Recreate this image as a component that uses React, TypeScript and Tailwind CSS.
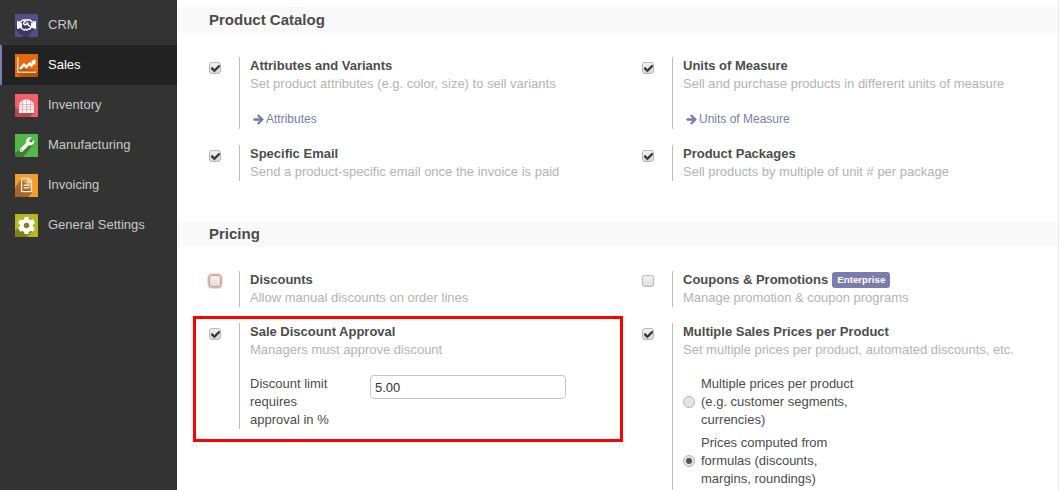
import type { ReactNode } from "react";
import { FaArrowRight, FaCheck, FaCog, FaRegFileAlt, FaRegHandshake, FaWrench } from "react-icons/fa";

function CrmIcon() {
  return (
    <svg width="23" height="23" viewBox="0 0 23 23" className="block">
      <rect width="23" height="23" fill="#544f84" />
      <polygon points="2,11 8,8 21,13 13,23 8,23 0,15" fill="#3d3961" />
      <FaRegHandshake x={2} y={1.5} size={19} color="#fff" />
      <path d="M3 9h4v5H3zM16 9h4v5h-4z" fill="#fff" />
    </svg>
  );
}

function SalesIcon() {
  return (
    <svg width="23" height="23" viewBox="0 0 23 23" className="block">
      <rect width="23" height="23" fill="#e3690c" />
      <polygon points="2,4 2,19 6,23 23,23 23,19 19,16 2,14" fill="#b4570f" />
      <path d="M2.8 3v15.2H21" fill="none" stroke="#f3c9a4" strokeWidth="1.6" />
      <path d="M5 15l4-4.5 2.5 2.5 3-3.5 2 2 2-3" fill="none" stroke="#fff" strokeWidth="2.4" />
      <polygon points="15.5,7.5 20.5,5 20.5,11" fill="#fff" />
    </svg>
  );
}

function InventoryIcon() {
  return (
    <svg width="23" height="23" viewBox="0 0 23 23" className="block">
      <rect width="23" height="23" fill="#f4606a" />
      <polygon points="0,12 4,17 19,17 19,19 15,23 0,23" fill="#b5484f" />
      <path d="M4 19V10C5.5 7.5 8.5 5.5 11.5 5 14.5 5.5 17.5 7.5 19 10v9z" fill="#fff" />
      <path d="M4 10.5h15M4 13h15M4 15.5h15M7.5 7v12M11.5 5v14M15.5 7v12" stroke="#f4a0a5" strokeWidth="0.8" />
    </svg>
  );
}

function ManufacturingIcon() {
  return (
    <svg width="23" height="23" viewBox="0 0 23 23" className="block">
      <rect width="23" height="23" fill="#53b84a" />
      <polygon points="4,16 16,6 20,9 8,23 0,23 0,19" fill="#3c7f37" />
      <FaWrench x={4.5} y={3} size={15} color="#f4f7ea" />
    </svg>
  );
}

function InvoicingIcon() {
  return (
    <svg width="23" height="23" viewBox="0 0 23 23" className="block">
      <rect width="23" height="23" fill="#f39c2f" />
      <polygon points="6,5 17,16 17,19 13,23 0,23 0,14" fill="#a4692a" />
      <FaRegFileAlt x={4} y={3.5} size={15} color="#f7e8d4" />
    </svg>
  );
}

function SettingsIcon() {
  return (
    <svg width="23" height="23" viewBox="0 0 23 23" className="block">
      <rect width="23" height="23" fill="#b2b81f" />
      <polygon points="3,14 14,4 20,14 12,23 0,23 0,17" fill="#7f8317" />
      <FaCog x={2.5} y={2.5} size={18} color="#fff" />
    </svg>
  );
}

const MENU = [
  { label: "CRM", icon: <CrmIcon /> },
  { label: "Sales", icon: <SalesIcon />, active: true },
  { label: "Inventory", icon: <InventoryIcon /> },
  { label: "Manufacturing", icon: <ManufacturingIcon /> },
  { label: "Invoicing", icon: <InvoicingIcon /> },
  { label: "General Settings", icon: <SettingsIcon /> },
];

function Sidebar() {
  return (
    <aside className="w-[177px] shrink-0 bg-[#333333] pt-[5px]">
      {MENU.map((item) => (
        <div
          key={item.label}
          className={
            item.active
              ? "flex h-10 items-center gap-[10px] border-l-2 border-[#7c7bad] bg-[#222222] pl-[13px] text-white"
              : "flex h-10 items-center gap-[10px] pl-[15px] text-[#c9c9c9]"
          }
        >
          {item.icon}
          <span>{item.label}</span>
        </div>
      ))}
    </aside>
  );
}

function Checkbox({ checked, focused }: { checked?: boolean; focused?: boolean }) {
  if (focused) {
    return (
      <span className="mt-1 block h-3 w-3 rounded-[3px] border border-[#b0a49c] bg-linear-to-b from-[#f2f2f2] to-[#dedede] shadow-[0_0_0_1.5px_#f3b49c]" />
    );
  }
  return (
    <span
      className={
        checked
          ? "mt-[5px] flex h-3 w-3 items-center justify-center rounded-[3px] border border-[#b5b5b5] bg-linear-to-b from-[#f2f2f2] to-[#d8d8d8]"
          : "mt-1 flex h-3 w-3 items-center justify-center rounded-[3px] border border-[#b5b5b5] bg-linear-to-b from-[#f2f2f2] to-[#dedede]"
      }
    >
      {checked && <FaCheck size={9} color="#333" strokeWidth={40} />}
    </span>
  );
}

function Setting({
  title,
  desc,
  checked,
  focused,
  badge,
  children,
}: {
  title: string;
  desc: string;
  checked?: boolean;
  focused?: boolean;
  badge?: boolean;
  children?: ReactNode;
}) {
  return (
    <div className="flex">
      <div className="w-[30px] shrink-0">
        <Checkbox checked={checked} focused={focused} />
      </div>
      <div className="border-l border-[#bdbdbd] pl-[10px]">
        <div className="flex h-[18px] items-center font-bold">
          {title}
          {badge && (
            <span className="ml-1 rounded-[3px] bg-[#7c7bad] px-[5px] py-[2px] text-[9.75px] leading-3 text-white">
              Enterprise
            </span>
          )}
        </div>
        <div className="text-[#b3b3b3]">{desc}</div>
        {children}
      </div>
    </div>
  );
}

function SectionTitle({ children }: { children: ReactNode }) {
  return (
    <h2 className="flex h-[26px] items-center bg-[#f9f9f9] pl-8 text-[15px] font-bold text-[#4c4c4c]">
      {children}
    </h2>
  );
}

function SubLink({ children }: { children: ReactNode }) {
  return (
    <div className="-mt-px mb-px flex items-center gap-[2px] pl-[3px] pt-[18px] text-[12px] text-[#7c7bad]">
      <FaArrowRight size={11} strokeWidth={40} />
      {children}
    </div>
  );
}

function Radio({ checked, children }: { checked?: boolean; children: ReactNode }) {
  return (
    <div className="flex items-center gap-[6px]">
      <span className="flex h-3 w-3 items-center justify-center rounded-full border border-[#b5b5b5] bg-[#e4e4e4]">
        {checked && <span className="h-[6px] w-[6px] rounded-full bg-[#555555]" />}
      </span>
      <span className="w-[155px]">{children}</span>
    </div>
  );
}

export default function App() {
  return (
    <div className="flex h-[490px] overflow-hidden bg-white font-['Liberation_Sans',Arial,sans-serif] text-[13px] leading-[18px] text-[#4c4c4c]">
      <Sidebar />
      <main className="mr-px flex-1 border-r border-[#ececec] pt-[7px]">
        <SectionTitle>Product Catalog</SectionTitle>
        <div className="grid grid-cols-[433px_1fr] gap-y-4 pb-10 pl-8 pt-6">
          <Setting title="Attributes and Variants" desc="Set product attributes (e.g. color, size) to sell variants" checked>
            <SubLink>Attributes</SubLink>
          </Setting>
          <Setting title="Units of Measure" desc="Sell and purchase products in different units of measure" checked>
            <SubLink>Units of Measure</SubLink>
          </Setting>
          <Setting title="Specific Email" desc="Send a product-specific email once the invoice is paid" checked />
          <Setting title="Product Packages" desc="Sell products by multiple of unit # per package" checked />
        </div>

        <SectionTitle>Pricing</SectionTitle>
        <div className="grid grid-cols-[433px_1fr] gap-y-4 pl-8 pt-6">
          <Setting title="Discounts" desc="Allow manual discounts on order lines" focused />
          <Setting title="Coupons & Promotions" desc="Manage promotion & coupon programs" badge />
          <div className="relative">
            <Setting title="Sale Discount Approval" desc="Managers must approve discount" checked>
              <div className="mt-4 flex items-start">
                <span className="mr-5 w-[100px]">Discount limit requires approval in %</span>
                <input
                  readOnly
                  value="5.00"
                  className="h-6 w-[196px] rounded-[4px] border border-[#c4c4c4] bg-white px-1 text-[13px] text-[#333333] outline-none"
                />
              </div>
            </Setting>
            <div className="absolute left-[-16px] top-[-7px] h-[126px] w-[430px] border-[3px] border-[#ff0000]" />
          </div>
          <Setting title="Multiple Sales Prices per Product" desc="Set multiple prices per product, automated discounts, etc." checked>
            <div className="mt-4 flex flex-col gap-[5px] pb-4">
              <Radio>Multiple prices per product (e.g. customer segments, currencies)</Radio>
              <Radio checked>Prices computed from formulas (discounts, margins, roundings)</Radio>
            </div>
          </Setting>
        </div>
      </main>
    </div>
  );
}
